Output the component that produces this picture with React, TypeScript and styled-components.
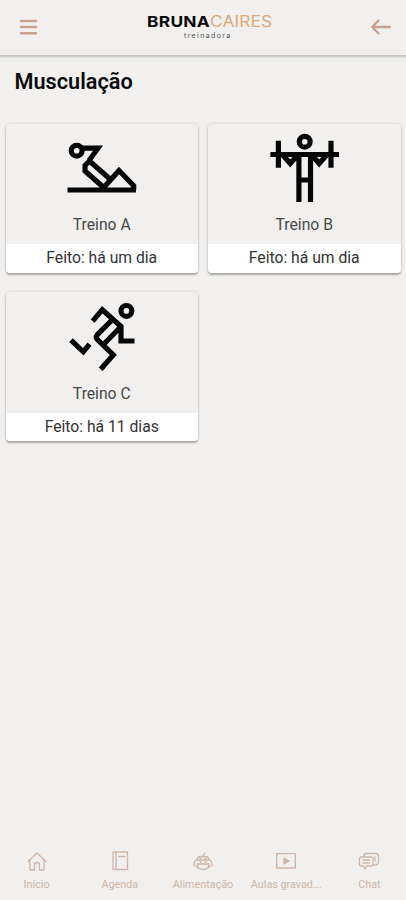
import React from "react";
import styled, { createGlobalStyle } from "styled-components";

const GlobalStyle = createGlobalStyle`
  * { box-sizing: border-box; }
  body { margin: 0; background: #f1f0ee; font-family: Roboto, "Liberation Sans", sans-serif; }
  button { border: 0; padding: 0; background: none; font: inherit; }
`;

const Screen = styled.div`
  display: flex;
  flex-direction: column;
  height: 900px;
  background: #f1f0ee;
`;

const Header = styled.header`
  display: flex;
  justify-content: space-between;
  height: 55px;
  padding: 0 14px 0 19px;
  box-shadow: 0 1px 2px 1px rgba(0, 0, 0, 0.2);
`;

const IconButton = styled.button`
  display: flex;
  width: 22px;
  height: 53px;
  align-items: center;
  color: #c5a28f;
`;

const Brand = styled.div`
  display: flex;
  flex-direction: column;
  width: 126px;
  padding-top: 12px;
  margin-left: 9px;
`;

const BrandName = styled.div`
  display: flex;
  height: 18px;
  font-family: Inter, sans-serif;
  font-size: 15.2px;
  line-height: 19px;
  white-space: nowrap;
  transform: scaleX(1.14);
  transform-origin: left;
`;

const BrandWord = styled.span<{ $light?: boolean }>`
  font-weight: ${(p) => (p.$light ? 400 : 700)};
  color: ${(p) => (p.$light ? "#d9ab7c" : "#080808")};
  letter-spacing: ${(p) => (p.$light ? "0.1px" : "0.25px")};
`;

const BrandRole = styled.div`
  padding-left: 37px;
  margin-top: 1px;
  font-family: Inter, sans-serif;
  font-size: 7px;
  line-height: 9px;
  letter-spacing: 1.4px;
  color: #555;
`;

const Title = styled.h1`
  margin: 13px 0 0 14.5px;
  font-size: 21.7px;
  line-height: 28px;
  font-weight: 600;
  color: #0b0b0b;
`;

const Grid = styled.main`
  display: grid;
  grid-template-columns: 192.5px 192.5px;
  grid-auto-rows: 149px;
  gap: 19.5px 10px;
  flex: 1;
  padding: 27.5px 0 0 5.5px;
`;

const Card = styled.article`
  display: flex;
  flex-direction: column;
  align-items: center;
  border-radius: 4px;
  overflow: hidden;
  padding-top: 9.5px;
  box-shadow: 0 2px 2px rgba(0, 0, 0, 0.28), 0 0 3px rgba(0, 0, 0, 0.14);
`;

const Figure = styled.svg`
  width: 70px;
  height: 70px;
  fill: none;
  stroke: #050505;
  stroke-width: 5.2;
`;

const CardName = styled.div`
  margin-top: 11px;
  height: 30px;
  font-size: 15.7px;
  line-height: 22px;
  color: #484848;
`;

const CardStatus = styled.div`
  width: 100%;
  flex: 1;
  background: #fff;
  font-size: 15.7px;
  line-height: 28px;
  text-align: center;
  color: #333;
`;

const TabBar = styled.nav`
  display: grid;
  grid-template-columns: repeat(5, 83.2px);
  justify-content: center;
  height: 53px;
`;

const Tab = styled.button`
  display: flex;
  flex-direction: column;
  align-items: center;
  color: #cdb6aa;
  font-size: 10.8px;
  line-height: 14px;
  gap: 6px;
  padding-top: 3px;
`;

const TabIcon = styled.svg`
  width: 22px;
  height: 22px;
  fill: none;
  stroke: currentColor;
  stroke-width: 1.3;
  stroke-linejoin: round;
  stroke-linecap: round;
`;

const workouts = [
  {
    name: "Treino A",
    status: "Feito: há um dia",
    art: (
      <>
        <circle cx="9.7" cy="17.7" r="5.4" />
        <path d="M15 15.2H31L22 27.5M43.5 46.5L22.5 28L18 32.5V38L36.7 54.5L52 37.5L66.7 52.7V57M.5 57H69" />
      </>
    ),
  },
  {
    name: "Treino B",
    status: "Feito: há um dia",
    art: (
      <g transform="translate(.7 0)">
        <circle cx="35" cy="8.7" r="5.4" />
        <path d="M.7 21.5H69.3M8.7 7.7V34.7M61.3 7.7V34.7M13.5 22.5L20.5 30.5L27.5 22.5M42.5 22.5L49.5 30.5L56.5 22.5M29.2 22V69M40.8 22V69M29.2 47H40.8" />
      </g>
    ),
  },
  {
    name: "Treino C",
    status: "Feito: há 11 dias",
    art: (
      <>
        <circle cx="59.4" cy="8.9" r="5.4" />
        <path d="M25.7 19.2L35.3 7.7L54 24.5V39H67.5M45.5 17.5L30.2 32.8Q28.2 35.5 31 38.2L46.3 53L33.7 67.2M54 24.5L35 44M4 38.2L16.3 49.8L22.5 42.2" />
      </>
    ),
  },
];

const tabs = [
  {
    label: "Início",
    art: <path d="M2 11.5L11 3L20 11.5M4 10V20H8.5V15Q8.5 12.5 11 12.5T13.5 15V20H18V10" />,
  },
  {
    label: "Agenda",
    art: <path d="M4 2H18.5V19.5H4ZM7 2V19.5M10 6.5H16" />,
  },
  {
    label: "Alimentação",
    art: (
      <>
        <path d="M11 7Q11 4 13 3M5 10Q5 6.5 9 6.5H13Q17 6.5 17 10M4 10H18M5 10Q1.5 11 2 15.5L5 17M17 10Q20.5 11 20 15.5L17 17M5 14H17L16 18Q11 21 6 18Z" />
        <path d="M8 8.5H9M13 8.5H14M8 12H9M13 12H14" />
      </>
    ),
  },
  {
    label: "Aulas gravad...",
    art: (
      <>
        <path d="M1.7 3.7H20.3V18H1.7Z" />
        <path d="M9 8L14 11L9 14Z" fill="currentColor" />
      </>
    ),
  },
  {
    label: "Chat",
    art: (
      <path d="M6 7V6Q6 3.5 8.5 3.5H18Q20.5 3.5 20.5 6V12Q20.5 15 16 15M3.5 7H13Q15 7 15 9V14Q15 16 13 16H8.5L7 19L5.5 16H3.5Q1.5 16 1.5 14V9Q1.5 7 3.5 7ZM5 10H11.5M5 13H11.5M17 7V11" />
    ),
  },
];

export default function App() {
  return (
    <Screen>
      <GlobalStyle />
      <Header>
        <IconButton aria-label="Menu">
          <svg width="20" height="20" viewBox="0 0 20 20" fill="none" stroke="currentColor" strokeWidth="2.4" strokeLinecap="round">
            <path d="M2 4H17M2 10H17M2 16.3H17" />
          </svg>
        </IconButton>
        <Brand>
          <BrandName>
            <BrandWord>BRUNA</BrandWord>
            <BrandWord $light>CAIRES</BrandWord>
          </BrandName>
          <BrandRole>treinadora</BrandRole>
        </Brand>
        <IconButton aria-label="Voltar">
          <svg width="22" height="20" viewBox="0 0 22 20" fill="none" stroke="currentColor" strokeWidth="2.3" strokeLinecap="round" strokeLinejoin="round">
            <path d="M8.5 3.5L2.2 10L8.5 16.5M2.7 10H20" />
          </svg>
        </IconButton>
      </Header>
      <Title>Musculação</Title>
      <Grid>
        {workouts.map((w) => (
          <Card key={w.name}>
            <Figure viewBox="0 0 70 70">{w.art}</Figure>
            <CardName>{w.name}</CardName>
            <CardStatus>{w.status}</CardStatus>
          </Card>
        ))}
      </Grid>
      <TabBar>
        {tabs.map((t) => (
          <Tab key={t.label}>
            <TabIcon viewBox="0 0 22 22">{t.art}</TabIcon>
            <span>{t.label}</span>
          </Tab>
        ))}
      </TabBar>
    </Screen>
  );
}
